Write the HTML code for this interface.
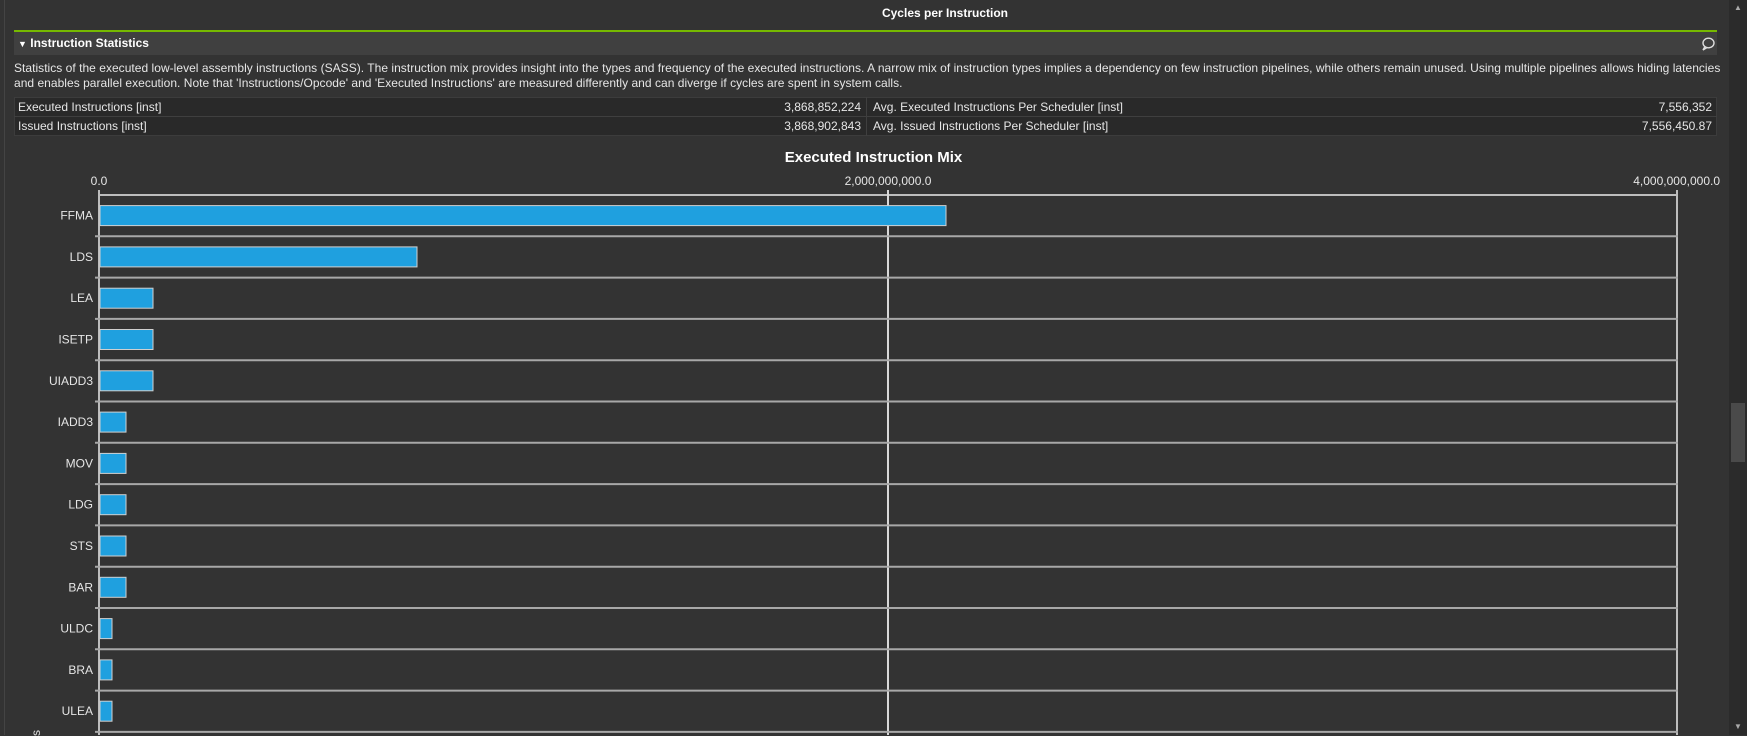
<!DOCTYPE html>
<html><head><meta charset="utf-8"><style>
html,body{margin:0;padding:0;}
body{width:1747px;height:735px;background:#333333;overflow:hidden;position:relative;font-family:"Liberation Sans",sans-serif;color:#e6e6e6;}
.abs{position:absolute;}
.t{font-size:12px;white-space:nowrap;}
</style></head><body>
<div class="abs" style="left:4px;top:0;width:1px;height:735px;background:#444"></div>
<div class="abs t" style="left:0;width:1890px;top:6px;text-align:center;font-weight:bold;color:#fff;">Cycles per Instruction</div>
<div class="abs" style="left:14px;top:30px;width:1703px;height:2px;background:#76b900"></div>
<div class="abs" style="left:14px;top:32px;width:1703px;height:23px;background:#404040"></div>
<div class="abs t" style="left:18px;top:36px;font-weight:bold;color:#fff;"><span style="font-size:9px;">&#9660;</span> Instruction Statistics</div>
<svg class="abs" style="left:1700px;top:36px" width="16" height="16" viewBox="0 0 16 16"><ellipse cx="8.5" cy="7" rx="5.5" ry="4.8" fill="none" stroke="#ddd" stroke-width="1.4"/><path d="M5 10.5 L3 14 L7 11.5" fill="none" stroke="#ddd" stroke-width="1.4"/></svg>
<div class="abs t" style="left:14px;top:61px;line-height:15px;letter-spacing:0.03px;font-size:12px;">Statistics of the executed low-level assembly instructions (SASS). The instruction mix provides insight into the types and frequency of the executed instructions. A narrow mix of instruction types implies a dependency on few instruction pipelines, while others remain unused. Using multiple pipelines allows hiding latencies<br>and enables parallel execution. Note that 'Instructions/Opcode' and 'Executed Instructions' are measured differently and can diverge if cycles are spent in system calls.</div>
<div class="abs" style="left:14px;top:97px;width:1703px;height:39px;background:#292929;border:1px solid #3c3c3c;box-sizing:border-box"></div>
<div class="abs" style="left:14px;top:116px;width:1703px;height:1px;background:#3f3f3f"></div>
<div class="abs" style="left:866px;top:97px;width:1px;height:39px;background:#3f3f3f"></div>
<div class="abs t" style="left:18px;top:100px;">Executed Instructions [inst]</div>
<div class="abs t" style="left:18px;top:119px;">Issued Instructions [inst]</div>
<div class="abs t" style="left:700px;width:161px;text-align:right;top:100px;">3,868,852,224</div>
<div class="abs t" style="left:700px;width:161px;text-align:right;top:119px;">3,868,902,843</div>
<div class="abs t" style="left:873px;top:100px;">Avg. Executed Instructions Per Scheduler [inst]</div>
<div class="abs t" style="left:873px;top:119px;">Avg. Issued Instructions Per Scheduler [inst]</div>
<div class="abs t" style="left:1500px;width:212px;text-align:right;top:100px;">7,556,352</div>
<div class="abs t" style="left:1500px;width:212px;text-align:right;top:119px;">7,556,450.87</div>
<div class="abs" style="left:0;width:1747px;top:149px;text-align:center;font-size:15px;font-weight:bold;color:#fff;">Executed Instruction Mix</div>
<svg class="abs" style="left:0;top:0" width="1747" height="735">
<g font-family="Liberation Sans, sans-serif" font-size="12" fill="#e6e6e6">
<text x="99" y="185" text-anchor="middle">0.0</text>
<text x="888" y="185" text-anchor="middle">2,000,000,000.0</text>
<text x="1720" y="185" text-anchor="end">4,000,000,000.0</text>
</g>
<g stroke="#bdbdbd" stroke-width="2">
<line x1="99" y1="195" x2="1678" y2="195"/>
<line x1="99" y1="190" x2="99" y2="735"/>
<line x1="888" y1="190" x2="888" y2="735" stroke="#d8d8d8"/>
<line x1="1677" y1="190" x2="1677" y2="735"/>
</g>
<g stroke="#a8a8a8" stroke-width="2" id="rows"></g>
<g id="bars"></g>
</svg>
<div class="abs" style="left:1729px;top:0;width:18px;height:735px;background:#2b2b2b"></div>
<div class="abs" style="left:1731px;top:403px;width:14px;height:59px;background:#4a4a4a"></div>
<div class="abs" style="left:1734px;top:3px;font-size:8px;color:#aaa">&#9650;</div>
<div class="abs" style="left:1734px;top:722px;font-size:8px;color:#aaa">&#9660;</div>
<div class="abs" style="left:33px;top:726px;font-size:12px;transform:rotate(-90deg);color:#ddd">s</div>
<script>
(function(){
var names=["FFMA","LDS","LEA","ISETP","UIADD3","IADD3","MOV","LDG","STS","BAR","ULDC","BRA","ULEA"];
var ends=[946,417,153,153,153,126,126,126,126,126,112,112,112];
var ns="http://www.w3.org/2000/svg";var rows=document.getElementById("rows"),bars=document.getElementById("bars");
for(var i=0;i<13;i++){var tp=195+i*41.3,bt=tp+41.3,c=tp+20.6;
var l=document.createElementNS(ns,"line");l.setAttribute("x1",95);l.setAttribute("x2",1678);l.setAttribute("y1",bt);l.setAttribute("y2",bt);rows.appendChild(l);
var r=document.createElementNS(ns,"rect");r.setAttribute("x",100);r.setAttribute("y",c-10);r.setAttribute("width",ends[i]-100);r.setAttribute("height",20);r.setAttribute("fill","#1fa0df");r.setAttribute("stroke","#d0d0d0");r.setAttribute("stroke-width","1");bars.appendChild(r);
var t=document.createElementNS(ns,"text");t.setAttribute("x",93);t.setAttribute("y",c+4);t.setAttribute("text-anchor","end");t.setAttribute("font-family","Liberation Sans, sans-serif");t.setAttribute("font-size","12");t.setAttribute("fill","#e6e6e6");t.textContent=names[i];bars.appendChild(t);}
})();
</script>
</body></html>
